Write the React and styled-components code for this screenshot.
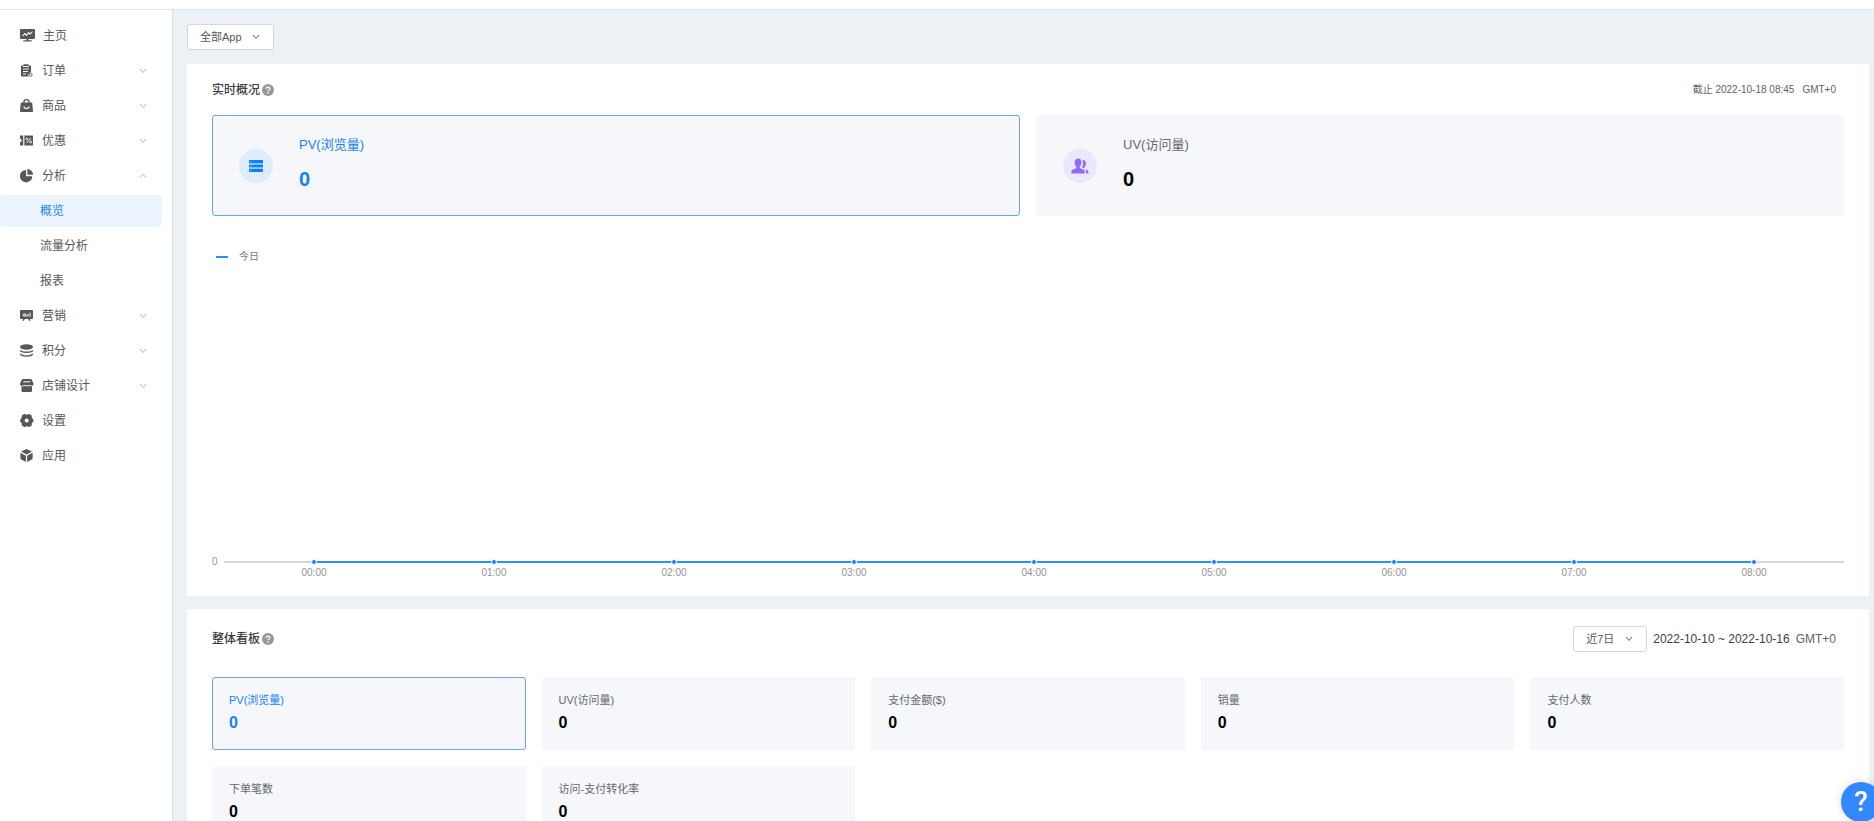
import React, { useState } from "react";
import styled, { createGlobalStyle } from "styled-components";

const GlobalStyle = createGlobalStyle`
  *, *::before, *::after { box-sizing: border-box; }
  body {
    margin: 0;
    color: #5f6166;
    font: 12px/16px "Liberation Sans", "Noto Sans CJK SC", sans-serif;
  }
  button, select { font: inherit; color: inherit; }
`;

const Shell = styled.div`
  display: flex;
  flex-direction: column;
  height: 100vh;
  overflow: hidden;
  background: #fff;
`;

const TopBar = styled.header`
  flex: none;
  height: 10px;
  border-bottom: 1px solid #e4e5e7;
`;

const Body = styled.div`
  display: flex;
  flex: 1;
  min-height: 0;
`;

const Sidebar = styled.nav`
  flex: none;
  width: 173px;
  padding: 10px 10px 0 0;
  border-right: 1px solid #dcdddf;
`;

const NavList = styled.ul`
  display: flex;
  flex-direction: column;
  gap: 3px;
  margin: 0;
  padding: 0;
  list-style: none;
`;

const NavLink = styled.a`
  display: flex;
  align-items: center;
  gap: 8px;
  width: 100%;
  height: 32px;
  padding: 0 15px 0 20px;
  border: 0;
  background: none;
  color: #55575c;
  text-align: left;
  text-decoration: none;
  cursor: pointer;
`;

const NavText = styled.span`
  flex: 1;
`;

const SubList = styled(NavList)`
  margin-top: 3px;
`;

const SubLink = styled.a`
  display: flex;
  align-items: center;
  height: 32px;
  padding-left: 40px;
  border-radius: 4px;
  color: ${(p) => (p.$active ? "#1a86ff" : "#55575c")};
  background: ${(p) => (p.$active ? "#ecf5ff" : "transparent")};
  text-decoration: none;
`;

const Main = styled.main`
  display: flex;
  flex: 1;
  flex-direction: column;
  min-width: 0;
  padding: 14px 5px 0 14px;
  background: #edf1f6;
  overflow-y: auto;
  scrollbar-width: none;
`;

const SelectWrap = styled.label`
  display: inline-grid;
  align-items: center;
  align-self: flex-start;
  width: ${(p) => p.$width}px;
  height: 26px;
  font-size: 11px;

  & > * { grid-area: 1 / 1; }
  & > svg { justify-self: end; margin-right: 14px; pointer-events: none; }
`;

const Select = styled.select`
  width: 100%;
  height: 26px;
  padding: 0 12px;
  border: 1px solid #d5d6d9;
  border-radius: 3px;
  background: #fff;
  color: #55575c;
  appearance: none;
`;

const Panel = styled.section`
  flex: none;
  margin-top: ${(p) => p.$top}px;
  padding: 0 25px 16px;
  background: #fff;
`;

const PanelHeader = styled.div`
  display: flex;
  align-items: center;
  justify-content: space-between;
  height: ${(p) => p.$height}px;
  padding: 0 8px ${(p) => p.$bottom || 0}px 0;
`;

const Title = styled.h2`
  display: flex;
  align-items: center;
  gap: 2px;
  margin: 0;
  color: #3a3b3e;
  font-size: 12px;
  font-weight: 500;
`;

const Period = styled.div`
  display: flex;
  align-items: center;
  gap: ${(p) => p.$gap}px;
  font-size: ${(p) => p.$size}px;
`;

const Dates = styled.span`
  color: #3f4043;
`;

const Cards = styled.div`
  display: grid;
  grid-template-columns: repeat(${(p) => p.$columns}, 1fr);
  gap: 16px;
`;

const Card = styled.button`
  display: flex;
  padding: 0;
  border: 1px solid ${(p) => (p.$active ? "#66a9f2" : "#f5f7fb")};
  border-radius: 3px;
  background: #f5f7fb;
  color: ${(p) => (p.$active ? "#1a80f5" : "#66686d")};
  text-align: left;
  cursor: pointer;
`;

const LargeCard = styled(Card)`
  gap: 26px;
  height: 101px;
  padding: 19px 26px;
`;

const SmallCard = styled(Card)`
  flex-direction: column;
  gap: 5px;
  height: 73px;
  padding: 14px 16px;
`;

const Badge = styled.span`
  display: flex;
  align-items: center;
  justify-content: center;
  align-self: center;
  width: 34px;
  height: 34px;
  border-radius: 50%;
  background: ${(p) => p.$bg};
`;

const CardText = styled.span`
  display: flex;
  flex-direction: column;
  gap: 14px;
`;

const Label = styled.span`
  font-size: ${(p) => (p.$large ? 13 : 11)}px;
  line-height: ${(p) => (p.$large ? 20 : 16)}px;
`;

const Value = styled.strong`
  color: ${(p) => (p.$active ? "inherit" : "#000")};
  font-size: ${(p) => (p.$large ? 20 : 16)}px;
  line-height: 20px;
`;

const Legend = styled.div`
  display: flex;
  align-items: center;
  gap: 11px;
  height: 20px;
  margin-top: 31px;
  padding-left: 4px;
  color: #77797d;
  font-size: 10px;
`;

const LegendLine = styled.i`
  width: 12px;
  height: 2px;
  background: #2b90ff;
`;

const Chart = styled.div`
  display: flex;
  align-items: stretch;
`;

const YAxis = styled.div`
  display: flex;
  align-items: flex-end;
  width: 12px;
  padding-bottom: 10px;
  color: #939496;
  font-size: 10px;
`;

const Plot = styled.svg`
  flex: 1;
  min-width: 0;
  height: 313px;
  fill: #939496;
  font-size: 10px;
`;

const HelpButton = styled.button`
  position: fixed;
  right: -7px;
  bottom: -1px;
  width: 40px;
  height: 40px;
  padding: 0;
  border: 0;
  border-radius: 50%;
  background: #3388ff;
  box-shadow: 0 0 8px rgba(0, 0, 0, 0.15);
  color: #fff;
  font: 500 28px/40px Roboto, sans-serif;
  cursor: pointer;
`;

const Chevron = ({ up, color = "#55575c" }) => (
  <svg width="8" height="8" viewBox="0 0 8 8" fill="none" stroke={color} aria-hidden="true">
    <path d={up ? "M1 5.500 4 2.200l3 3.300" : "M1 2 4 5.500 7 2"} />
  </svg>
);

const HelpDot = () => (
  <svg width="12" height="12" viewBox="0 0 12 12" role="img" aria-label="说明">
    <circle cx="6" cy="6" r="6" fill="#999" />
    <path d="M4.2 4.8C4.2 2.4 7.9 2.5 7.8 4.7 7.7 5.8 6 5.8 6 7.2" fill="none" stroke="#fff" strokeWidth="1.2" />
    <circle cx="6" cy="9" r=".8" fill="#fff" />
  </svg>
);

const shapes = {
  home: (
    <>
      <path fill="currentColor" d="M1 0h13q1 0 1 1v8q0 1-1 1H8.500v1.200h3.200V12.500H3.300V11.200h3.200V10H1q-1 0-1-1V1q0-1 1-1z" />
      <path d="M2.500 6.800 5 4.500l1.500 1.800L8.700 3.600l1.300 1.600 2.500-2.700" fill="none" stroke="#fff" strokeWidth="1.100" />
    </>
  ),
  order: (
    <>
      <path fill="currentColor" d="M1.500 1.500H3.500V.3h5v1.200h2q.5 0 .5.500v6.200a3 3 0 0 0-2.500 4.300H1.500q-.5 0-.5-.5V2q0-.5.500-.5z" />
      <path d="M3 2.500h6M3 5h6M3 7.500h5M3 10h3" stroke="#fff" strokeWidth=".9" />
      <circle cx="10.600" cy="10.700" r="1.500" fill="none" stroke="currentColor" strokeWidth="1" />
    </>
  ),
  goods: (
    <>
      <path d="M3.800 4.200V3.400a2.700 2.700 0 0 1 5.400 0v.8" fill="none" stroke="currentColor" strokeWidth="1.300" />
      <path fill="currentColor" d="M1.500 3.500h10q.6 0 .7.600l.8 8q0 .9-.9.900H.9q-.9 0-.9-.900l.8-8q.1-.6.700-.600z" />
      <path d="M3.700 7.500c.6 2.700 5 2.700 5.600 0" fill="none" stroke="#fff" strokeWidth="1.200" />
    </>
  ),
  coupon: (
    <>
      <path fill="currentColor" d="M0 1.500h3.200v10H0V8.200a1.700 1.700 0 0 0 0-3.400zM4.400 1.500H13v10H4.400z" />
      <path d="M6.800 9 10.800 4" stroke="#fff" strokeWidth=".9" />
      <circle cx="7" cy="5" r="1" fill="none" stroke="#fff" strokeWidth=".8" />
      <circle cx="10.600" cy="8" r="1" fill="none" stroke="#fff" strokeWidth=".8" />
    </>
  ),
  pie: (
    <>
      <path fill="currentColor" d="M6 1v6.200h6.300A6.200 6.200 0 1 1 6 1z" />
      <path fill="currentColor" d="M7.400 0A5.900 5.900 0 0 1 13 5.800H7.400z" />
    </>
  ),
  marketing: (
    <>
      <path fill="currentColor" d="M1 1h11q1 0 1 1V9q0 1-1 1H9.800l.8 1.800H9L8.200 10H4.800L4 11.800H2.400L3.200 10H1q-1 0-1-1V2q0-1 1-1z" />
      <circle cx="4.200" cy="6" r="1.200" fill="none" stroke="#fff" strokeWidth=".9" />
      <path d="M5.900 4.800V7.700M8 5v2.700M10 3.700v4" stroke="#fff" strokeWidth="1" />
    </>
  ),
  points: (
    <>
      <ellipse cx="6.500" cy="3" rx="6.500" ry="2.700" fill="currentColor" />
      <path d="M.2 6.300c1.700 2.500 10.900 2.500 12.600 0M.2 9.800c1.700 2.900 10.900 2.900 12.600 0" fill="none" stroke="currentColor" strokeWidth="1.400" />
    </>
  ),
  store: (
    <>
      <path fill="currentColor" d="M3 0h7.500q1 0 1.400.9L13.500 4.500q0 2.200-1.500 2.500V12q0 1-1 1H2.500q-1 0-1-1V7Q0 6.700 0 4.500L1.600.9Q2 0 3 0z" />
      <path d="M3.300 2.800h6.900M2 6.300q1.400 1.400 2.800 0 2 1.600 4 0 1.400 1.400 2.800 0" fill="none" stroke="#fff" strokeWidth="1" />
    </>
  ),
  settings: (
    <>
      <path
        fill="currentColor"
        stroke="currentColor"
        strokeWidth="2"
        strokeLinejoin="round"
        d="M4.300 1 5.500 1.600H8L9.200 1l1.600 1-.1 1.600L12 5.600l.7.900-.7.900-1.300 2 .1 1.600-1.600 1L8 11.400H5.500L4.300 12l-1.600-1 .1-1.600-1.300-2-.7-.900.7-.900 1.300-2L2.700 2z"
      />
      <circle cx="6.700" cy="6.500" r="2" fill="#fff" />
    </>
  ),
  apps: (
    <path
      fill="currentColor"
      d="M6.500 0 12 2.500 6.500 5.500 1 2.500zM.4 3.700 5.900 6.700V13L.4 10zM12.600 3.700 7.100 6.700V13l5.500-3z"
    />
  ),
};

const NavIcon = ({ name }) => (
  <svg
    width={name === "home" ? 15 : 14}
    height="14"
    viewBox={name === "home" ? "0 0 15 14" : "0 0 14 14"}
    color="#55575c"
    aria-hidden="true"
  >
    {shapes[name]}
  </svg>
);

const ListIcon = () => (
  <svg width="14" height="12" viewBox="0 0 14 12" aria-hidden="true">
    <path d="M0 0h14v3.300H0zM0 4.400h14v3.200H0zM0 8.700h14V12H0z" fill="#0a80ff" />
    <path d="M0 3.300h14v1.100H0zM0 7.600h14v1.100H0z" fill="#8cc4ff" />
    <path d="M1.300 1.600h1.200M1.300 6h1.200M1.300 10.400h1.200" stroke="#9ccbff" />
  </svg>
);

const UsersIcon = () => (
  <svg width="18" height="16" viewBox="0 0 18 16" fill="#9069ff" aria-hidden="true">
    <path d="M3.700 4.200C3.700-.8 10.300-.8 10.300 4.200 10.300 6.600 9.500 7.800 8.800 8.700v1.200l4 1.800q1.200.7 1.200 3.800H.3q0-3.100 1.200-3.800l3.800-1.800V8.700C4.500 7.800 3.700 6.600 3.700 4.200z" />
    <path d="M11.300 2c4-.6 4.400 4 2.800 6.300l-.8 1.300v.8l-2.300-1c1.400-2.500 1.400-5 .3-7.400zM14.400 11.200q3.200.8 3.300 4.300h-2.600q.1-3-.7-4.300z" />
  </svg>
);

const menu = [
  { name: "主页", icon: "home" },
  { name: "订单", icon: "order", expandable: true },
  { name: "商品", icon: "goods", expandable: true },
  { name: "优惠", icon: "coupon", expandable: true },
  { name: "分析", icon: "pie", expandable: true, children: ["概览", "流量分析", "报表"] },
  { name: "营销", icon: "marketing", expandable: true },
  { name: "积分", icon: "points", expandable: true },
  { name: "店铺设计", icon: "store", expandable: true },
  { name: "设置", icon: "settings" },
  { name: "应用", icon: "apps" },
];

const hours = ["00:00", "01:00", "02:00", "03:00", "04:00", "05:00", "06:00", "07:00", "08:00"];
const position = (i) => `${((i + 0.5) / hours.length) * 100}%`;

const realtime = [
  { label: "PV(浏览量)", bg: "#dfecfc", Icon: ListIcon },
  { label: "UV(访问量)", bg: "#ebe8fb", Icon: UsersIcon },
];

const metrics = ["PV(浏览量)", "UV(访问量)", "支付金额($)", "销量", "支付人数", "下单笔数", "访问-支付转化率"];

function Dropdown({ label, width, options }) {
  return (
    <SelectWrap $width={width}>
      <Select aria-label={label}>
        {options.map((option) => (
          <option key={option}>{option}</option>
        ))}
      </Select>
      <Chevron />
    </SelectWrap>
  );
}

function TrendChart() {
  return (
    <Chart>
      <YAxis>
        <span>0</span>
      </YAxis>
      <Plot role="img" aria-label="今日趋势">
        <line x1="0" x2="100%" y1="295" y2="295" stroke="#d5d6d8" strokeWidth="2" />
        <line x1={position(0)} x2={position(hours.length - 1)} y1="295" y2="295" stroke="#2b90ff" strokeWidth="2" />
        {hours.map((hour, i) => (
          <g key={hour}>
            <circle cx={position(i)} cy="295" r="2.500" fill="#1684ff" stroke="#fff" />
            <text x={position(i)} y="309" textAnchor="middle">
              {hour}
            </text>
          </g>
        ))}
      </Plot>
    </Chart>
  );
}

export default function App() {
  const [current, setCurrent] = useState(0);
  const [metric, setMetric] = useState(0);

  return (
    <Shell>
      <GlobalStyle />
      <TopBar />
      <Body>
        <Sidebar aria-label="主导航">
          <NavList>
            {menu.map((item) => (
              <li key={item.name}>
                <NavLink
                  as={item.expandable ? "button" : "a"}
                  href={item.expandable ? undefined : "#"}
                  aria-expanded={item.expandable ? Boolean(item.children) : undefined}
                >
                  <NavIcon name={item.icon} />
                  <NavText>{item.name}</NavText>
                  {item.expandable && <Chevron up={Boolean(item.children)} color="#b4b6ba" />}
                </NavLink>
                {item.children && (
                  <SubList>
                    {item.children.map((child, i) => (
                      <li key={child}>
                        <SubLink href="#" $active={i === 0}>
                          {child}
                        </SubLink>
                      </li>
                    ))}
                  </SubList>
                )}
              </li>
            ))}
          </NavList>
        </Sidebar>
        <Main>
          <Dropdown label="应用" width={87} options={["全部App"]} />
          <Panel $top={14}>
            <PanelHeader $height={51}>
              <Title>
                实时概况
                <HelpDot />
              </Title>
              <Period $size={10} $gap={8}>
                <span>截止 2022-10-18 08:45</span>
                <span>GMT+0</span>
              </Period>
            </PanelHeader>
            <Cards $columns={2}>
              {realtime.map(({ label, bg, Icon }, i) => (
                <LargeCard key={label} $active={i === current} onClick={() => setCurrent(i)}>
                  <Badge $bg={bg}>
                    <Icon />
                  </Badge>
                  <CardText>
                    <Label $large>{label}</Label>
                    <Value $large $active={i === current}>0</Value>
                  </CardText>
                </LargeCard>
              ))}
            </Cards>
            <Legend>
              <LegendLine />
              今日
            </Legend>
            <TrendChart />
          </Panel>
          <Panel $top={13}>
            <PanelHeader $height={68} $bottom={8}>
              <Title>
                整体看板
                <HelpDot />
              </Title>
              <Period $size={12} $gap={6}>
                <Dropdown label="时间范围" width={74} options={["近7日"]} />
                <Dates>2022-10-10 ~ 2022-10-16</Dates>
                <span>GMT+0</span>
              </Period>
            </PanelHeader>
            <Cards $columns={5}>
              {metrics.map((label, i) => (
                <SmallCard key={label} $active={i === metric} onClick={() => setMetric(i)}>
                  <Label>{label}</Label>
                  <Value $active={i === metric}>0</Value>
                </SmallCard>
              ))}
            </Cards>
          </Panel>
        </Main>
      </Body>
      <HelpButton aria-label="帮助">?</HelpButton>
    </Shell>
  );
}
